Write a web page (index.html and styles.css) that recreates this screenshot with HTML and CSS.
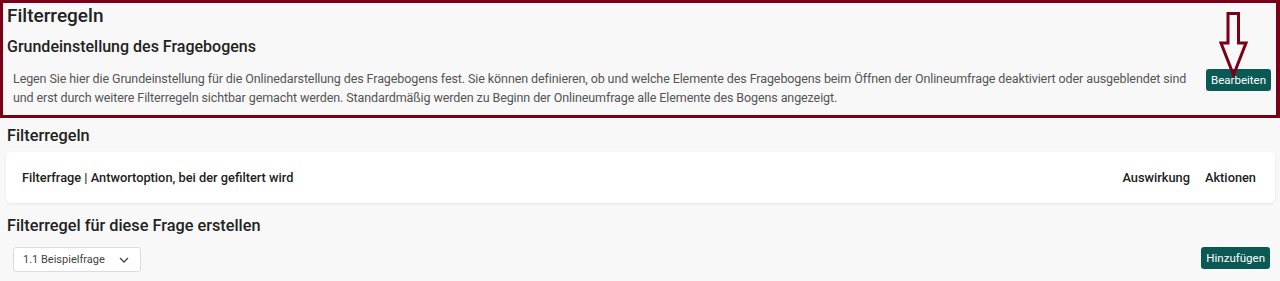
FILE: index.html
```html
<!DOCTYPE html>
<html lang="de">
<head>
  <meta charset="UTF-8">
  <meta name="viewport" content="width=device-width, initial-scale=1.0">
  <title>Filterregeln</title>
  <link rel="stylesheet" href="styles.css">
</head>
<body>
  <div class="highlight-box">
    <h1>Filterregeln</h1>
    <h2>Grundeinstellung des Fragebogens</h2>
    <div class="setting-row">
      <p>Legen Sie hier die Grundeinstellung für die Onlinedarstellung des Fragebogens fest. Sie können definieren, ob und welche Elemente des Fragebogens beim Öffnen der Onlineumfrage deaktiviert oder ausgeblendet sind und erst durch weitere Filterregeln sichtbar gemacht werden. Standardmäßig werden zu Beginn der Onlineumfrage alle Elemente des Bogens angezeigt.</p>
      <button class="btn">Bearbeiten</button>
    </div>
    <!-- annotation arrow pointing at the button -->
    <svg class="arrow" width="30" height="66" viewBox="0 0 30 66">
      <path d="M9 1.5 H19.5 V31 H27 L14.5 63 L2 31 H9 Z" fill="none" stroke="#7a0018" stroke-width="3" stroke-linejoin="miter"/>
    </svg>
  </div>

  <div class="section">
    <h2>Filterregeln</h2>
    <div class="rules-card">
      <span class="col-main">Filterfrage | Antwortoption, bei der gefiltert wird</span>
      <span class="col">Auswirkung</span>
      <span class="col">Aktionen</span>
    </div>
  </div>

  <div class="section">
    <h2 class="create-title">Filterregel für diese Frage erstellen</h2>
    <div class="create-row">
      <div class="select">
        <span>1.1 Beispielfrage</span>
        <svg width="10" height="6" viewBox="0 0 10 6"><path d="M1 1 L5 5 L9 1" fill="none" stroke="#444" stroke-width="1.3"/></svg>
      </div>
      <button class="btn">Hinzufügen</button>
    </div>
  </div>
</body>
</html>
```

FILE: styles.css
```css
body {
  margin: 0;
  background-color: #f8f8f8;
  font-family: Roboto, "Noto Sans", sans-serif;
  color: #222;
}

h1, h2, p {
  margin: 0;
}

.highlight-box {
  position: relative;
  height: 112px;
  border: 3.5px solid #7a0018;
  border-right-width: 4.5px;
  padding: 0 0 0 4px;
}

.highlight-box h1 {
  font-size: 19px;
  font-weight: 500;
  line-height: 22px;
  margin-top: 2px;
}

.highlight-box h2 {
  font-size: 16px;
  font-weight: 500;
  line-height: 20px;
  margin-top: 10px;
}

.setting-row {
  display: flex;
  align-items: flex-start;
  padding: 12px 5px 0 6px;
}

.setting-row p {
  flex: 1;
  font-size: 12.5px;
  letter-spacing: -0.1px;
  line-height: 19px;
  color: #555;
  padding-right: 19px;
}

.btn {
  font-family: inherit;
  background-color: #0b5955;
  color: #fff;
  border: none;
  border-radius: 3px;
  font-size: 11.5px;
  padding: 3px 5px;
  height: 22px;
  flex-shrink: 0;
}

.arrow {
  position: absolute;
  right: 27px;
  top: 9px;
}

.section {
  padding: 0 5px 0 7px;
}

.section h2 {
  font-size: 16.3px;
  font-weight: 500;
  line-height: 20px;
  margin-top: 8px;
}

.rules-card {
  display: flex;
  align-items: center;
  gap: 15px;
  background: #fff;
  border-radius: 5px;
  box-shadow: 0 1px 3px rgba(0, 0, 0, 0.08);
  margin: 6px 0 0 -1px;
  height: 51px;
  padding: 0 19px 0 16px;
  font-size: 12.8px;
  font-weight: 500;
}

.rules-card .col-main {
  flex: 1;
}

.section .create-title {
  margin-top: 13px;
}

.create-row {
  display: flex;
  justify-content: space-between;
  align-items: flex-start;
  margin-top: 11px;
  padding: 0 5px 0 6px;
}

.select {
  display: flex;
  align-items: center;
  justify-content: space-between;
  width: 106px;
  height: 23px;
  padding: 0 11px 0 9px;
  background: #fff;
  border: 1px solid #dcdcdc;
  border-radius: 3px;
  font-size: 11px;
  color: #444;
}
```
